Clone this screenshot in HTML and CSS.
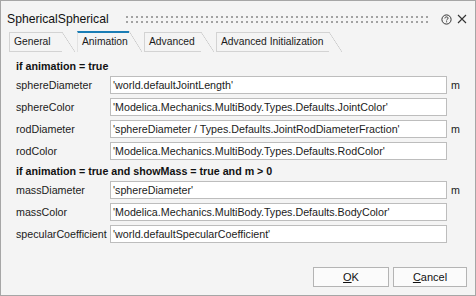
FILE: index.html
```html
<!DOCTYPE html>
<html>
<head>
<meta charset="utf-8">
<link rel="stylesheet" href="styles.css">
</head>
<body>
<div class="dialog">
  <div class="titlebar">
    <span class="title">SphericalSpherical</span>
    <span class="grip"></span>
    <svg class="help" width="11" height="11" viewBox="0 0 11 11">
      <circle cx="5.5" cy="5.5" r="4.6" fill="none" stroke="#333" stroke-width="1"/>
      <path d="M3.9 4.4 C3.9 3.4 4.6 2.9 5.5 2.9 C6.4 2.9 7.1 3.4 7.1 4.2 C7.1 5.2 5.6 5.3 5.6 6.4" fill="none" stroke="#333" stroke-width="1"/>
      <rect x="5.1" y="7.3" width="1" height="1" fill="#333"/>
    </svg>
    <svg class="close" width="10" height="10" viewBox="0 0 10 10">
      <path d="M1 1 L9 9 M9 1 L1 9" stroke="#333" stroke-width="1.1" fill="none"/>
    </svg>
  </div>
  <div class="tabbar">
    <div class="tab t-general">General</div>
    <div class="tab t-anim active">Animation</div>
    <div class="tab t-adv">Advanced</div>
    <div class="tab t-init">Advanced Initialization</div>
  </div>
  <div class="content">
    <div class="heading">if animation = true</div>
    <div class="row"><span class="label">sphereDiameter</span><span class="field">'world.defaultJointLength'</span><span class="unit">m</span></div>
    <div class="row"><span class="label">sphereColor</span><span class="field">'Modelica.Mechanics.MultiBody.Types.Defaults.JointColor'</span><span class="unit"></span></div>
    <div class="row"><span class="label">rodDiameter</span><span class="field">'sphereDiameter / Types.Defaults.JointRodDiameterFraction'</span><span class="unit">m</span></div>
    <div class="row"><span class="label">rodColor</span><span class="field">'Modelica.Mechanics.MultiBody.Types.Defaults.RodColor'</span><span class="unit"></span></div>
    <div class="heading">if animation = true and showMass = true and m &gt; 0</div>
    <div class="row"><span class="label">massDiameter</span><span class="field">'sphereDiameter'</span><span class="unit">m</span></div>
    <div class="row"><span class="label">massColor</span><span class="field">'Modelica.Mechanics.MultiBody.Types.Defaults.BodyColor'</span><span class="unit"></span></div>
    <div class="row"><span class="label">specularCoefficient</span><span class="field">'world.defaultSpecularCoefficient'</span><span class="unit"></span></div>
  </div>
  <div class="footer">
    <button class="btn ok"><u>O</u>K</button>
    <button class="btn cancel"><u>C</u>ancel</button>
  </div>
</div>
</body>
</html>
```
FILE: styles.css
```css
html, body {
  margin: 0;
  padding: 0;
}
body {
  width: 476px;
  height: 296px;
  overflow: hidden;
  font-family: "Liberation Sans", Arial, sans-serif;
  color: #1b1b1b;
}
.dialog {
  box-sizing: border-box;
  width: 476px;
  height: 296px;
  border: 1px solid #a6a6a6;
  background: #f4f4f4;
  display: flex;
  flex-direction: column;
}
.titlebar {
  height: 30px;
  display: flex;
  align-items: center;
  padding: 6px 8px 0 6px;
  box-sizing: border-box;
}
.title {
  font-size: 12.2px;
  line-height: 14px;
  color: #111;
}
.grip {
  flex: 1;
  height: 7px;
  margin: 0 12px 0 17px;
  background-image: radial-gradient(circle at 1px 1px, #a2a2a2 0.9px, transparent 1px);
  background-size: 5px 5px;
}
.help {
  margin-right: 5px;
}
.close {
  margin-right: 0;
}
.tabbar {
  height: 21px;
  display: flex;
  align-items: flex-end;
  padding-left: 8px;
  font-size: 10.3px;
}
.tab {
  position: relative;
  box-sizing: border-box;
  height: 20px;
  line-height: 18px;
  padding: 0 0 0 4px;
  border: 1px solid #d3d3d3;
  border-right: none;
  margin-right: 15px;
  white-space: nowrap;
}
.t-general { width: 53px; }
.t-anim { width: 52px; }
.t-adv { width: 57px; }
.t-init { width: 113px; }
.tab::after {
  content: "";
  position: absolute;
  top: -1px;
  bottom: -1px;
  right: -13px;
  width: 13px;
  background: linear-gradient(to top right, transparent calc(50% - 0.6px), #c8c8c8 50%, transparent calc(50% + 0.6px));
}
.tab.active {
  height: 21px;
  border-top: 2px solid #1a7db5;
  border-bottom: none;
  border-left-color: #e2e2e2;
}
.tab.active::after {
  top: -2px;
  bottom: 0;
}
.content {
  flex: 1;
  padding: 7px 0 0 15px;
  font-size: 10.7px;
  display: flex;
  flex-direction: column;
}
.heading {
  height: 14px;
  line-height: 14px;
  font-weight: bold;
  margin-bottom: 3px;
  color: #111;
}
.row {
  display: grid;
  grid-template-columns: 94px 337px 1fr;
  height: 18px;
  margin-bottom: 4px;
  align-items: center;
}
.label {
  white-space: nowrap;
}
.field {
  box-sizing: border-box;
  height: 18px;
  line-height: 16px;
  border: 1px solid #bdbdbd;
  background: #fff;
  padding-left: 2px;
  white-space: nowrap;
  overflow: hidden;
}
.unit {
  padding-left: 4px;
}
.footer {
  display: flex;
  justify-content: flex-end;
  gap: 4px;
  padding: 0 8px 8px 0;
}
.btn {
  box-sizing: border-box;
  height: 20px;
  font-family: "Liberation Sans", Arial, sans-serif;
  font-size: 11px;
  color: #111;
  background: #fbfbfb;
  border: 1px solid #b4b4b4;
  border-radius: 0;
  padding: 0;
}
.btn.ok {
  width: 76px;
}
.btn.cancel {
  width: 74px;
}
```
